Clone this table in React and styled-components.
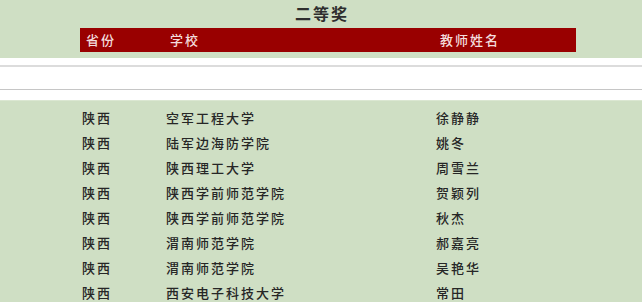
import React from "react";
import styled, { createGlobalStyle } from "styled-components";

const Global = createGlobalStyle`
  html, body { margin: 0; padding: 0; background: #ffffff; }
  body { font-family: "Noto Sans CJK SC", "Noto Sans", sans-serif; }
`;

const Page = styled.div`
  width: 642px;
  height: 302px;
  overflow: hidden;
  display: flex;
  flex-direction: column;
`;

const TopSection = styled.section`
  background: #cfdfc4;
  height: 58px;
  flex-shrink: 0;
  display: flex;
  flex-direction: column;
`;

const Title = styled.h2`
  margin: 0;
  height: 28px;
  line-height: 26px;
  text-align: center;
  font-size: 16px;
  font-weight: 700;
  letter-spacing: 2px;
  padding-left: 2px;
  color: #2e2e2e;
`;

const HeaderBar = styled.div`
  margin-left: 80px;
  width: 490px;
  height: 24px;
  padding-left: 6px;
  background: #990000;
  display: grid;
  grid-template-columns: 84px 270px 1fr;
  align-items: center;
`;

const HeaderCell = styled.span`
  font-size: 13px;
  letter-spacing: 2px;
  color: #f3dcdc;
  font-weight: 500;
  line-height: 24px;
`;

const Spacer = styled.div`
  height: 42px;
  flex-shrink: 0;
  background: #ffffff;
  display: flex;
  flex-direction: column;
`;

const Line = styled.div`
  height: ${(p) => p.$h}px;
  margin-top: ${(p) => p.$top}px;
  background: ${(p) => p.$color};
`;

const List = styled.section`
  flex: 1 0 auto;
  background: #cfdfc4;
  border-top: 1px solid #dbe7d2;
  padding-top: 4px;
  display: flex;
  flex-direction: column;
`;

const Row = styled.div`
  height: 25px;
  margin-left: 82px;
  display: grid;
  grid-template-columns: 84px 270px 1fr;
  align-items: center;
  flex-shrink: 0;
`;

const Cell = styled.span`
  font-size: 13px;
  letter-spacing: 2px;
  color: #262626;
  font-weight: 500;
  line-height: 25px;
`;

const rows = [
  ["陕西", "空军工程大学", "徐静静"],
  ["陕西", "陆军边海防学院", "姚冬"],
  ["陕西", "陕西理工大学", "周雪兰"],
  ["陕西", "陕西学前师范学院", "贺颖列"],
  ["陕西", "陕西学前师范学院", "秋杰"],
  ["陕西", "渭南师范学院", "郝嘉亮"],
  ["陕西", "渭南师范学院", "吴艳华"],
  ["陕西", "西安电子科技大学", "常田"],
];

export default function App() {
  return (
    <>
      <Global />
      <Page>
        <TopSection>
          <Title>二等奖</Title>
          <HeaderBar>
            <HeaderCell>省份</HeaderCell>
            <HeaderCell>学校</HeaderCell>
            <HeaderCell>教师姓名</HeaderCell>
          </HeaderBar>
        </TopSection>
        <Spacer>
          <Line $top={7} $h={2} $color="#dcdcdc" />
          <Line $top={22} $h={1} $color="#c6c6c6" />
        </Spacer>
        <List>
          {rows.map((r, i) => (
            <Row key={i}>
              <Cell>{r[0]}</Cell>
              <Cell>{r[1]}</Cell>
              <Cell>{r[2]}</Cell>
            </Row>
          ))}
        </List>
      </Page>
    </>
  );
}
